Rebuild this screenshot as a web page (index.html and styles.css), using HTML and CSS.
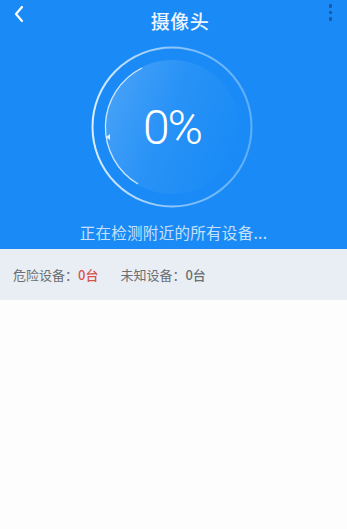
FILE: index.html
```html
<!DOCTYPE html>
<html lang="zh">
<head>
<meta charset="utf-8">
<title>摄像头</title>
<link rel="stylesheet" href="styles.css">
</head>
<body>
<div class="page">
  <section class="top">
    <header class="nav">
      <svg class="back" width="12" height="18" viewBox="0 0 12 18"><path d="M9 2 L3 9 L9 16" fill="none" stroke="#fff" stroke-width="2.2" stroke-linecap="round" stroke-linejoin="round"/></svg>
      <h1 class="title">摄像头</h1>
      <div class="more"><span></span><span></span><span></span></div>
    </header>
    <div class="dial">
      <svg class="dial-svg" width="162" height="162" viewBox="0 0 162 162">
        <defs>
          <linearGradient id="ring" x1="0" y1="0" x2="1" y2="0">
            <stop offset="0" stop-color="#ffffff" stop-opacity="0.85"/>
            <stop offset="0.5" stop-color="#ffffff" stop-opacity="0.5"/>
            <stop offset="1" stop-color="#ffffff" stop-opacity="0.3"/>
          </linearGradient>
          <linearGradient id="fill" x1="0" y1="0.2" x2="1" y2="0.6">
            <stop offset="0" stop-color="#ffffff" stop-opacity="0.2"/>
            <stop offset="0.5" stop-color="#ffffff" stop-opacity="0.06"/>
            <stop offset="1" stop-color="#ffffff" stop-opacity="0"/>
          </linearGradient>
        </defs>
        <circle cx="81" cy="81" r="79.5" fill="none" stroke="url(#ring)" stroke-width="2"/>
        <circle cx="81" cy="81" r="67" fill="url(#fill)"/>
        <path d="M 51 22 A 66 66 0 0 0 47 138" fill="none" stroke="#ffffff" stroke-opacity="0.75" stroke-width="1.3"/>
        <path d="M 15 91 L 19 88 L 19 94 Z" fill="#ffffff" fill-opacity="0.85"/>
      </svg>
      <div class="pct">0%</div>
    </div>
    <p class="status">正在检测附近的所有设备...</p>
  </section>
  <section class="summary">
    <span class="item">危险设备：<b class="danger">0台</b></span>
    <span class="item">未知设备：<b class="unknown">0台</b></span>
  </section>
  <section class="list"></section>
</div>
</body>
</html>
```

FILE: styles.css
```css
html, body {
  margin: 0;
  padding: 0;
  background: #fdfdfd;
}
body {
  font-family: "Noto Sans CJK SC", "Noto Sans", sans-serif;
  width: 347px;
  height: 529px;
  overflow: hidden;
}
.page {
  display: flex;
  flex-direction: column;
  height: 529px;
}
.top {
  background: #1a8bf6;
  height: 249px;
  display: flex;
  flex-direction: column;
  align-items: center;
}
.nav {
  width: 100%;
  height: 46px;
  display: flex;
  align-items: flex-start;
  justify-content: space-between;
  box-sizing: border-box;
  padding: 0 14px 0 13px;
}
.back {
  margin-top: 5px;
}
.title {
  margin: 9px 0 0 6px;
  font-size: 19px;
  line-height: 24px;
  font-weight: 500;
  color: #eef5ff;
  letter-spacing: 0.5px;
}
.more {
  display: flex;
  flex-direction: column;
  gap: 3px;
  margin-top: 4px;
  width: 4px;
}
.more span {
  width: 3.5px;
  height: 3.5px;
  background: #1b5aa6;
  border-radius: 1px;
}
.dial {
  width: 162px;
  height: 162px;
  position: relative;
  display: flex;
  align-items: center;
  justify-content: center;
  margin-right: 3px;
}
.dial-svg {
  position: absolute;
  left: 0;
  top: 0;
}
.pct {
  position: relative;
  font-family: "Roboto", sans-serif;
  font-weight: 300;
  font-size: 48px;
  line-height: 1;
  color: #ffffff;
  letter-spacing: -2px;
  margin-top: 2px;
}
.status {
  margin: 14px 0 0 0;
  font-size: 15.5px;
  line-height: 20px;
  color: #c6e0fb;
  letter-spacing: 0.3px;
}
.summary {
  height: 51px;
  background: #e9eef4;
  display: flex;
  align-items: center;
  gap: 22px;
  padding-left: 13px;
  font-size: 13px;
  color: #6b6e72;
}
.item b {
  font-weight: 500;
}
.danger {
  color: #d9534f;
}
.unknown {
  color: #6b6e72;
}
.list {
  flex: 1;
  background: #fdfdfd;
}
```
